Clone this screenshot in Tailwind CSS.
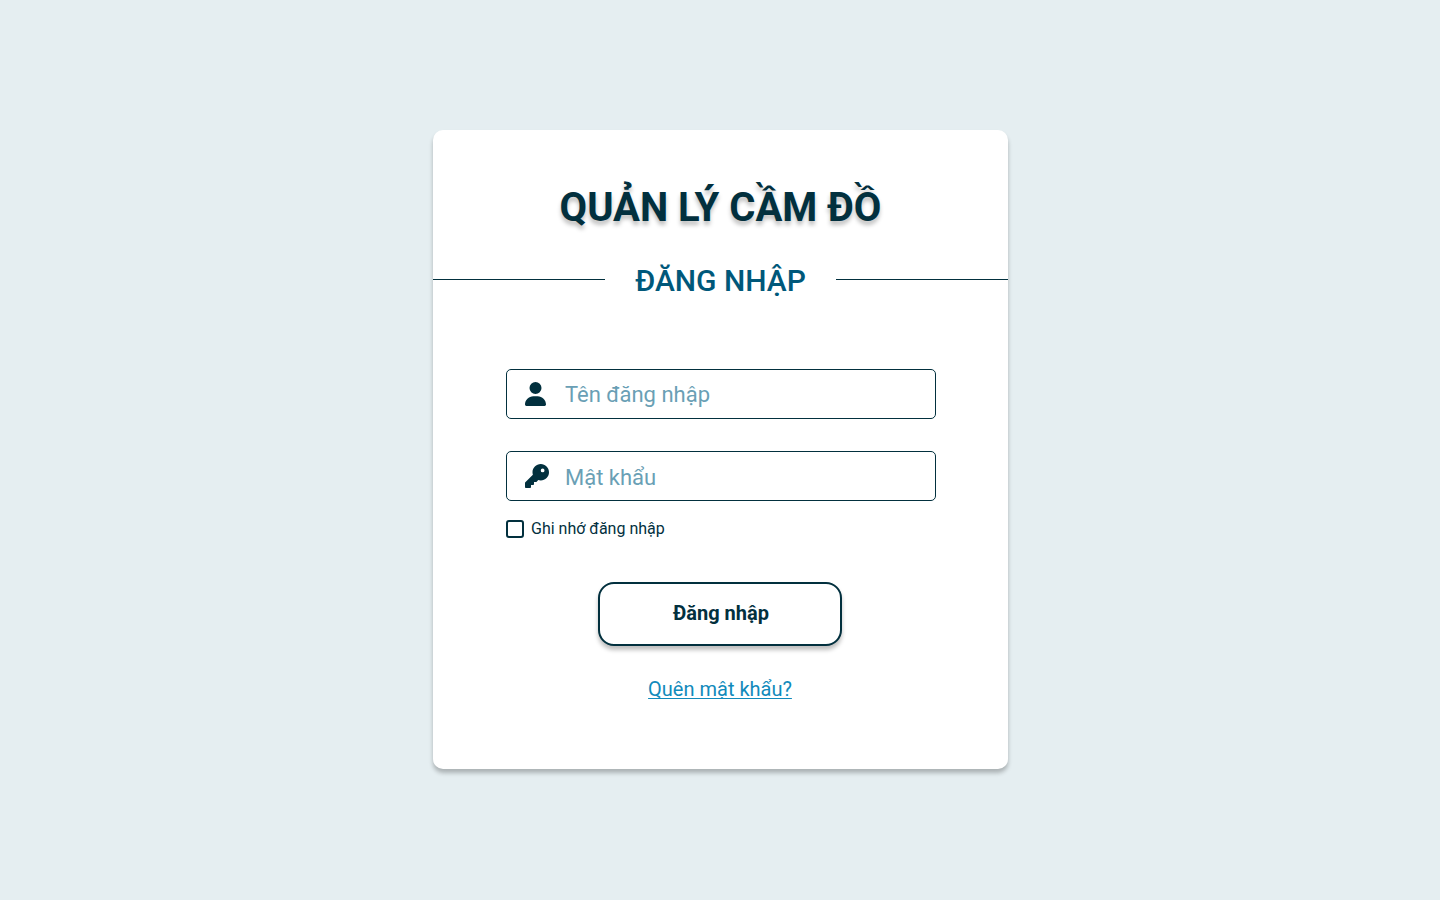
<!DOCTYPE html>
<html lang="vi">
<head>
<meta charset="utf-8">
<meta name="viewport" content="width=device-width, initial-scale=1">
<title>Quản lý cầm đồ - Đăng nhập</title>
<script src="https://cdn.jsdelivr.net/npm/@tailwindcss/browser@4"></script>
</head>
<body class="bg-[#e5eef1] font-[Roboto,'Noto_Sans',sans-serif] text-[#02303e]">
<main class="flex min-h-screen items-center justify-center pl-px pb-px">
  <section class="w-full max-w-[575px] rounded-[10px] bg-white pt-[54px] pb-[66px] shadow-[0_4px_4px_rgba(0,0,0,0.25)]">
    <h1 class="text-center text-[40px] leading-[48px] font-bold [text-shadow:0_4px_4px_rgba(0,0,0,0.25)]">QUẢN LÝ CẦM ĐỒ</h1>
    <div class="mt-7 flex items-center gap-[30px]">
      <span class="h-px flex-1 bg-[#02303e]"></span>
      <h2 class="pt-[3px] text-[30px] leading-9 font-medium text-[#00587a]">ĐĂNG NHẬP</h2>
      <span class="h-px flex-1 bg-[#02303e]"></span>
    </div>
    <form class="mt-[70px] flex flex-col pr-[72px] pl-[73px]">
      <div class="flex h-[50px] items-center rounded-[5px] border border-[#02303e] px-[18px]">
        <label for="username" aria-label="Tên đăng nhập" class="flex w-10 shrink-0">
          <svg class="h-6 w-[21px]" viewBox="0 0 448 512" fill="currentColor" aria-hidden="true"><path d="M224 256A128 128 0 1 0 224 0a128 128 0 1 0 0 256zm-45.700 48C79.800 304 0 383.800 0 482.300 0 498.700 13.300 512 29.700 512h388.600c16.400 0 29.700-13.300 29.700-29.700C448 383.800 368.200 304 269.700 304h-91.400z"/></svg>
        </label>
        <input id="username" type="text" placeholder="Tên đăng nhập" class="h-full min-w-0 flex-1 text-[22px] outline-none placeholder:text-[#6a9fb5]">
      </div>
      <div class="mt-8 flex h-[50px] items-center rounded-[5px] border border-[#02303e] px-[18px]">
        <label for="password" aria-label="Mật khẩu" class="flex w-10 shrink-0">
          <svg class="size-6" viewBox="0 0 512 512" fill="currentColor" aria-hidden="true"><path d="M336 352c97.200 0 176-78.800 176-176S433.200 0 336 0 160 78.800 160 176c0 18.700 2.900 36.800 8.300 53.700L7 391c-4.500 4.500-7 10.600-7 17v80c0 13.300 10.700 24 24 24h80c13.300 0 24-10.700 24-24v-40h40c13.300 0 24-10.700 24-24v-40h40c6.400 0 12.500-2.500 17-7l33.300-33.300c16.900 5.400 35 8.300 53.700 8.300zM376 96a40 40 0 1 1 0 80 40 40 0 1 1 0-80z"/></svg>
        </label>
        <input id="password" type="password" placeholder="Mật khẩu" class="h-full min-w-0 flex-1 pt-0.5 text-[22px] outline-none placeholder:text-[#6a9fb5]">
      </div>
      <div class="mt-4 flex items-center gap-[7px]">
        <input id="remember" type="checkbox" class="size-[18px] appearance-none rounded-[3px] border-2 border-[#02303e] checked:bg-[#02303e]">
        <label for="remember" class="text-base leading-6">Ghi nhớ đăng nhập</label>
      </div>
      <button type="submit" class="mt-[41px] mr-0.5 h-16 w-[244px] self-center rounded-2xl border-2 border-[#02303e] bg-white pb-0.5 pl-0.5 text-xl font-bold shadow-[0_4px_4px_rgba(0,0,0,0.25)]">Đăng nhập</button>
      <a href="#" class="mt-[29px] mr-0.5 self-center text-xl leading-7 text-[#118abb] underline decoration-1 underline-offset-2 [text-decoration-skip-ink:none]">Quên mật khẩu?</a>
    </form>
  </section>
</main>
</body>
</html>
